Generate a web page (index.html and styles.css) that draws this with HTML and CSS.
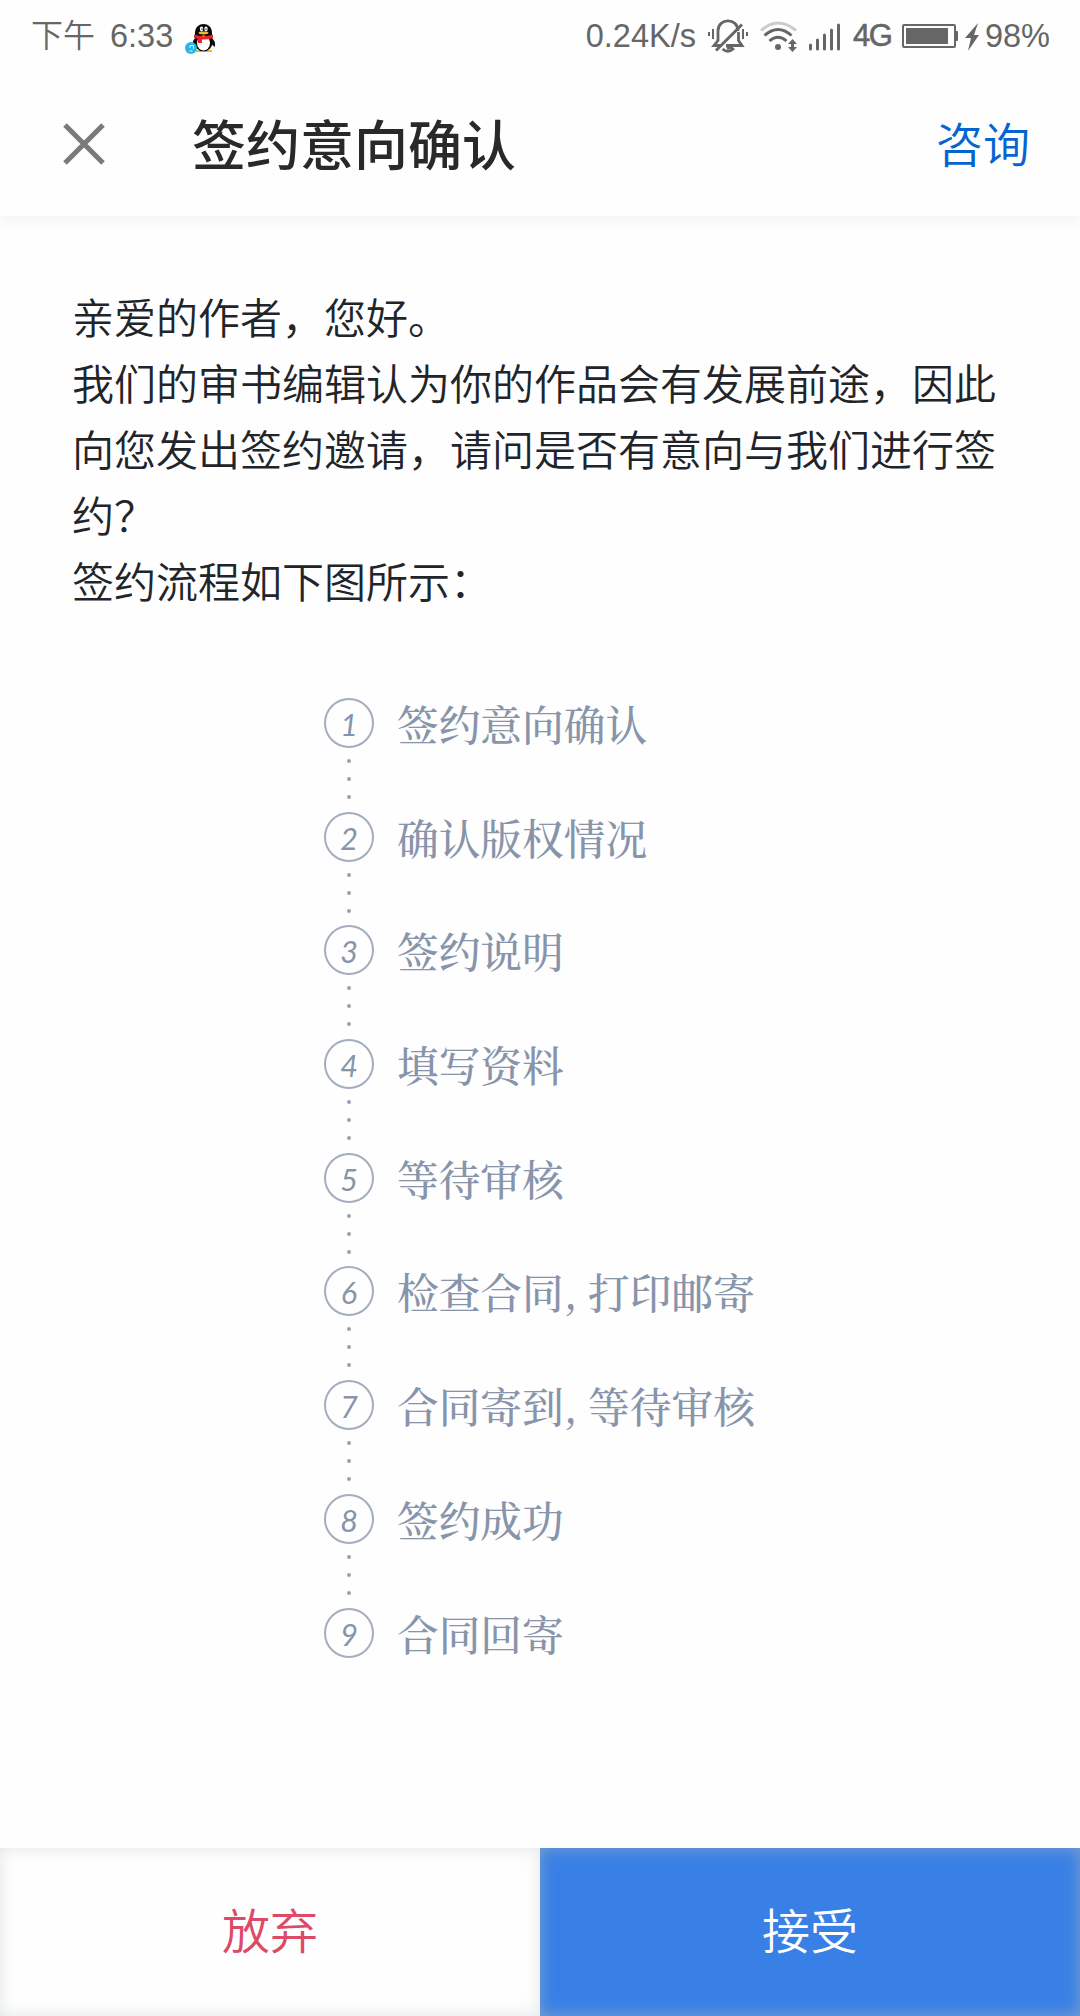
FILE: index.html
```html
<!DOCTYPE html>
<html lang="zh-CN">
<head>
  <meta charset="UTF-8">
  <meta name="viewport" content="width=device-width, initial-scale=1.0">
  <title>签约意向确认</title>
  <link rel="stylesheet" href="styles.css">
</head>
<body>
  <div class="status">
    <span class="ampm">下午</span>
    <span class="time">6:33</span>
    <svg class="qq" width="32" height="34" viewBox="0 0 32 34">
      <path d="M11 15Q6 20 8 26L12 23M26 15Q31 19 30 25L26 22" fill="#111"/>
      <path d="M11 28H17V30H11ZM19 28H27V30H19Z" fill="#f5b62c"/>
      <ellipse cx="18.500" cy="20" rx="9" ry="9.500" fill="#080808"/>
      <path d="M10 14V11C10 -1 27 -1 27 11V14Z" fill="#080808"/>
      <ellipse cx="18.500" cy="21" rx="6.500" ry="7.500" fill="#fff"/>
      <ellipse cx="16.500" cy="7" rx="1.700" ry="2.400" fill="#fff"/>
      <ellipse cx="21" cy="7" rx="1.700" ry="2.400" fill="#fff"/>
      <path d="M17 6.500V8M21 6.500V8" stroke="#111" stroke-width="1"/>
      <ellipse cx="18.500" cy="11" rx="5" ry="1.400" fill="#f5b62c"/>
      <path d="M9 12.500Q18.500 16 28 12.500V16Q22 18 17 17.500V21H13V17L9 16Z" fill="#e5232b"/>
      <circle cx="6" cy="26" r="6" fill="#29b5e8"/>
      <path d="M5 26V23.500H8.500V27M4.500 29H7.500" fill="none" stroke="#d8f3fd" stroke-width="1"/>
    </svg>
    <span class="speed">0.24K/s</span>
    <svg class="bell" width="40" height="34" viewBox="0 0 40 34" fill="none" stroke="#666" stroke-width="2.800">
      <path d="M12 26.500H6L10 21.500V12C10 -1.500 30 -1.500 30 12M30.500 13V21.500L34 26.500H18"/>
      <path d="M8 31.500L34 5.500" stroke-width="3"/>
      <path d="M14.500 30Q20 34.500 25 30Q23 27.500 19 29.500"/>
      <path d="M1 13V17M5 10V20M35 10V20M39 13V17" stroke-width="2"/>
    </svg>
    <svg class="wifi" width="38" height="32" viewBox="0 0 38 32" fill="none" stroke="#666" stroke-width="3">
      <path d="M1 9.500Q18 -5.500 36 9.500" stroke="#ccc"/>
      <path d="M4.500 14.500Q18 2.500 31.500 14.500M9.500 20Q18 12.500 26.500 20"/>
      <circle cx="18" cy="26" r="3" fill="#666" stroke="none"/>
      <path d="M32.500 18L37 23H34V26H37L32.500 31L28 26H31V23H28Z" fill="#666" stroke="none"/>
    </svg>
    <svg class="signal" width="32" height="28" viewBox="0 0 32 28" stroke="#666" stroke-width="3" stroke-linecap="round">
      <path d="M1.500 22V26M8.500 17V26M15.500 12V26M22.500 7V26M29.500 2V26"/>
    </svg>
    <span class="net">4G</span>
    <svg class="battery" width="56" height="24" viewBox="0 0 56 24">
      <rect x="1" y="1" width="52" height="22" rx="1" fill="none" stroke="#666" stroke-width="2"/>
      <path d="M4 4H46V20H4ZM53 7H55Q56 7 56 8V16Q56 17 55 17H53Z" fill="#666"/>
    </svg>
    <svg class="bolt" width="14" height="28" viewBox="0 0 14 28">
      <path d="M13 0L0 15H6L3 28L14 12H9Z" fill="#666"/>
    </svg>
    <span class="percent">98%</span>
  </div>
  <header class="header">
    <svg class="close" width="42" height="42" viewBox="0 0 42 42">
      <path d="M2 2L40 40M40 2L2 40" stroke="#7a7a7a" stroke-width="5"/>
    </svg>
    <h1 class="title">签约意向确认</h1>
    <a class="consult">咨询</a>
  </header>
  <main class="content">
    <p>亲爱的作者，您好。</p>
    <p>我们的审书编辑认为你的作品会有发展前途，因此向您发出签约邀请，请问是否有意向与我们进行签约？</p>
    <p>签约流程如下图所示：</p>
    <ol class="steps">
      <li><i>1</i><span>签约意向确认</span></li>
      <li><i>2</i><span>确认版权情况</span></li>
      <li><i>3</i><span>签约说明</span></li>
      <li><i>4</i><span>填写资料</span></li>
      <li><i>5</i><span>等待审核</span></li>
      <li><i>6</i><span>检查合同, 打印邮寄</span></li>
      <li><i>7</i><span>合同寄到, 等待审核</span></li>
      <li><i>8</i><span>签约成功</span></li>
      <li><i>9</i><span>合同回寄</span></li>
    </ol>
  </main>
  <footer class="actions">
    <button class="reject">放弃</button>
    <button class="accept">接受</button>
  </footer>
</body>
</html>
```

FILE: styles.css
```css
* {
  box-sizing: border-box;
  margin: 0;
  padding: 0;
}
body {
  display: flex;
  flex-direction: column;
  height: 2016px;
  background-color: #fefefe;
  font-family: "Noto Sans CJK SC", sans-serif;
  color: #212529;
}
svg {
  display: block;
  flex-shrink: 0;
}
/* 状态栏 */
.status {
  position: relative; /* 盖住标题栏向上的阴影 */
  z-index: 1;
  display: flex;
  align-items: center;
  height: 72px;
  padding: 0 30px 0 31px;
  background-color: #fefefe;
  font: 32.5px/72px "Liberation Sans", "Noto Sans CJK SC", sans-serif;
  color: #666;
  white-space: nowrap;
}
.ampm {
  width: 79px;
  font-size: 32px;
  font-weight: 350;
}
.time {
  width: 75px;
}
.qq {
  margin-top: 5px;
}
.speed {
  margin-left: auto;
}
.bell {
  margin-left: 12px;
}
.wifi {
  margin: 2px 0 0 12px;
}
.signal {
  margin: 2px 12px 0 11px;
}
.net {
  width: 38px;
  font-size: 31px;
  letter-spacing: -1.5px;
  -webkit-text-stroke: 0.6px #666;
}
.battery {
  margin-left: 11px;
}
.bolt {
  margin: 1px 6px 0 7px;
}
/* 标题栏 */
.header {
  display: flex;
  align-items: center;
  height: 144px;
  padding: 0 50px 0 63px;
  box-shadow: 0 4px 16px rgba(0, 0, 0, 0.05);
}
.title {
  margin: -2px 0 0 87px;
  font-size: 54px;
  font-weight: 500;
  line-height: 80px;
  color: #292929;
}
.consult {
  margin: -6px 0 0 auto;
  font-size: 47px;
  font-weight: 350;
  color: #0565d0;
}
.content {
  flex: 1;
  padding: 67px 72px 0;
  font-size: 42px;
  font-weight: 350;
  line-height: 66px;
}
/* 签约流程 */
.steps {
  margin: 85px 0 0 252px;
  list-style: none;
  color: #8794aa;
  > li {
    position: relative;
    display: flex;
    align-items: center;
    height: 50px;
    margin-bottom: 63.7px;
    font: 500 41.7px/50px "Noto Serif CJK SC", "Noto Serif SC", "Source Han Serif SC", "Noto Sans CJK SC", serif;
    white-space: nowrap;
  }
  i {
    width: 50px;
    height: 50px;
    margin-right: 23px;
    border: 2px solid #a3adbe;
    border-radius: 50%;
    text-align: center;
    font: italic 30.5px/48px Lato, sans-serif;
  }
  /* 三个小圆点, 用阴影画出另外两个 */
  > li:not(:last-child)::after {
    content: '';
    position: absolute;
    top: 61px;
    left: 22.5px;
    width: 4px;
    height: 4px;
    border-radius: 50%;
    background-color: #97a2b5;
    box-shadow: 0 18px #97a2b5, 0 36px #97a2b5;
  }
}
/* 底部按钮 */
.actions {
  display: flex;
  height: 168px;
  > button {
    flex: 1;
    padding-bottom: 8px;
    border: 0;
    font: 350 48px "Noto Sans CJK SC", sans-serif;
  }
}
.reject {
  background-color: #fefefe;
  color: #dc4a68;
  box-shadow: inset 0 0 16px rgba(173, 181, 189, 0.35);
}
.accept {
  background-color: #3880e6;
  color: #fff;
  box-shadow: inset 0 0 16px rgba(173, 181, 189, 0.6);
}
```
